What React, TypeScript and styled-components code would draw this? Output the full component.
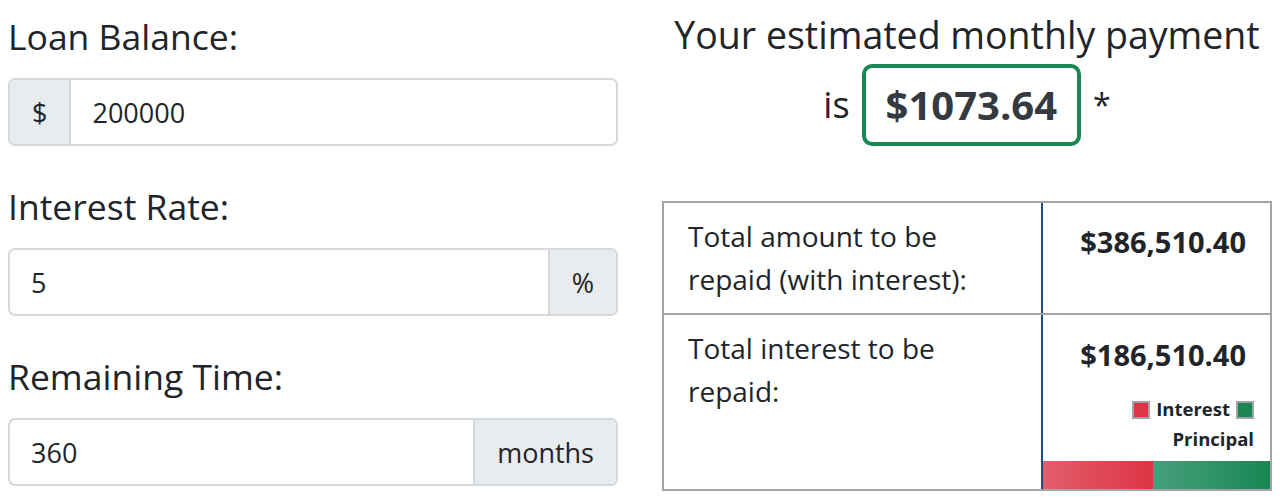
import React from 'react';
import styled, { createGlobalStyle } from 'styled-components';

const GlobalStyle = createGlobalStyle`
  html, body {
    margin: 0;
    padding: 0;
    background: #fff;
  }
  body {
    font-family: "Open Sans", "Noto Sans", sans-serif;
    color: #212529;
  }
  * {
    box-sizing: border-box;
  }
`;

const Page = styled.div`
  width: 1280px;
  display: flex;
  gap: 44px;
  padding: 0 8px;
`;

const Column = styled.div`
  flex: 1;
  min-width: 0;
  display: flex;
  flex-direction: column;
`;

const Form = styled(Column)`
  padding-top: 15px;
  gap: 39px;
`;

const Field = styled.div`
  display: flex;
  flex-direction: column;
`;

const Label = styled.label`
  font-size: 35.5px;
  line-height: 43px;
  margin-bottom: 20px;
`;

const InputGroup = styled.div`
  display: flex;
  height: 68px;
  border: 2px solid #d5d9dd;
  border-radius: 7px;
  overflow: hidden;
`;

const Addon = styled.span<{ $side: 'left' | 'right' }>`
  display: flex;
  align-items: center;
  padding: 0 22px;
  background: #e9ecef;
  font-size: 27px;
  color: #212529;
  ${p => (p.$side === 'left' ? 'border-right' : 'border-left')}: 2px solid #d5d9dd;
`;

const Input = styled.input`
  flex: 1;
  min-width: 0;
  border: none;
  outline: none;
  background: transparent;
  padding: 0 21px;
  font-family: inherit;
  font-size: 27px;
  color: #212529;
`;

const Heading = styled.h2`
  margin: 13px 0 0;
  font-size: 37.5px;
  line-height: 44px;
  font-weight: 400;
  text-align: center;
`;

const PaymentRow = styled.div`
  display: flex;
  justify-content: center;
  align-items: center;
  gap: 12px;
  margin-top: 7px;
  font-size: 36px;
  line-height: 44px;
`;

const Star = styled.span`
  font-size: 32px;
`;

const AmountBox = styled.div`
  border: 4px solid #198754;
  border-radius: 10px;
  padding: 8px 20px;
  font-size: 40px;
  line-height: 58px;
  font-weight: 700;
  color: #343a40;
`;

const Table = styled.div`
  margin-top: 55px;
  border: 2px solid #a4a4a4;
`;

const Row = styled.div<{ $last?: boolean }>`
  display: grid;
  grid-template-columns: 377px 1fr;
  border-bottom: ${p => (p.$last ? 'none' : '2px solid #a4a4a4')};
`;

const LabelCell = styled.div`
  padding: 12px 40px 12px 24px;
  font-size: 28px;
  line-height: 43px;
`;

const ValueCell = styled.div`
  border-left: 2px solid #1f4d82;
  display: flex;
  flex-direction: column;
`;

const Value = styled.div<{ $top: number }>`
  padding: ${p => p.$top}px 24px 0 0;
  text-align: right;
  font-size: 29px;
  line-height: 43px;
  font-weight: 700;
`;

const Legend = styled.div`
  margin: 18px 0 7px;
  padding: 0 16px 0 60px;
  text-align: right;
  font-size: 18.5px;
  line-height: 30px;
  font-weight: 700;
`;

const Swatch = styled.span<{ $color: string; $gap: 'left' | 'right' }>`
  display: inline-block;
  width: 18px;
  height: 18px;
  vertical-align: -3px;
  background: ${p => p.$color};
  border: 2px solid #a3a3a3;
  ${p => (p.$gap === 'left' ? 'margin-left' : 'margin-right')}: 6px;
`;

const Bar = styled.div`
  margin-top: auto;
  display: flex;
  height: 28px;
`;

const InterestBar = styled.div`
  background: linear-gradient(to right, #e35d6a, #dc3545);
`;

const PrincipalBar = styled.div`
  flex: 1;
  background: linear-gradient(to right, #479f7c, #198754);
`;

const balance = 200000;
const rate = 5;
const months = 360;

const App: React.FC = () => {
  const r = rate / 100 / 12;
  const payment = (balance * r) / (1 - Math.pow(1 + r, -months));
  const monthly = Math.round(payment * 100) / 100;
  const total = monthly * months;
  const interest = total - balance;
  const money = (n: number) =>
    '$' + n.toLocaleString('en-US', { minimumFractionDigits: 2, maximumFractionDigits: 2 });

  return (
    <>
      <GlobalStyle />
      <Page>
        <Form>
          <Field>
            <Label>Loan Balance:</Label>
            <InputGroup>
              <Addon $side="left">$</Addon>
              <Input value={balance} readOnly />
            </InputGroup>
          </Field>
          <Field>
            <Label>Interest Rate:</Label>
            <InputGroup>
              <Input value={rate} readOnly />
              <Addon $side="right">%</Addon>
            </InputGroup>
          </Field>
          <Field>
            <Label>Remaining Time:</Label>
            <InputGroup>
              <Input value={months} readOnly />
              <Addon $side="right">months</Addon>
            </InputGroup>
          </Field>
        </Form>
        <Column>
          <Heading>Your estimated monthly payment</Heading>
          <PaymentRow>
            <span>is</span>
            <AmountBox>${monthly.toFixed(2)}</AmountBox>
            <Star>*</Star>
          </PaymentRow>
          <Table>
            <Row>
              <LabelCell>Total amount to be repaid (with interest):</LabelCell>
              <ValueCell>
                <Value $top={17}>{money(total)}</Value>
              </ValueCell>
            </Row>
            <Row $last>
              <LabelCell>Total interest to be repaid:</LabelCell>
              <ValueCell>
                <Value $top={18}>{money(interest)}</Value>
                <Legend>
                  <Swatch $color="#dc3545" $gap="right" />
                  Interest
                  <Swatch $color="#198754" $gap="left" />{' '}
                  Principal
                </Legend>
                <Bar>
                  <InterestBar style={{ width: `${(interest / total) * 100}%` }} />
                  <PrincipalBar />
                </Bar>
              </ValueCell>
            </Row>
          </Table>
        </Column>
      </Page>
    </>
  );
};

export default App;
